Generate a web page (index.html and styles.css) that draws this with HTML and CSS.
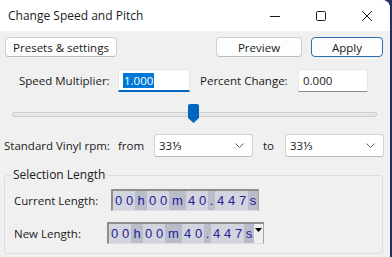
FILE: index.html
```html
<!DOCTYPE html>
<html lang="en">
<head>
  <meta charset="UTF-8" />
  <title>Change Speed and Pitch</title>
  <link rel="stylesheet" href="styles.css">
</head>
<body>
  <div class="window">
    <div class="titlebar">
      <span class="title">Change Speed and Pitch</span>
      <div class="caption">
        <span class="cap-btn">
          <svg width="12" height="12" viewBox="0 0 12 12"><line x1="1" y1="6.5" x2="11" y2="6.5" stroke="#1b1b1b" stroke-width="1"/></svg>
        </span>
        <span class="cap-btn">
          <svg width="12" height="12" viewBox="0 0 12 12"><rect x="1.5" y="1.5" width="9" height="9" rx="1" fill="none" stroke="#1b1b1b" stroke-width="1"/></svg>
        </span>
        <span class="cap-btn">
          <svg width="12" height="12" viewBox="0 0 12 12"><path d="M1 1 L11 11 M11 1 L1 11" stroke="#1b1b1b" stroke-width="1"/></svg>
        </span>
      </div>
    </div>

    <div class="content">
      <div class="btn-row">
        <button class="btn btn-presets">Presets &amp; settings</button>
        <span class="spacer"></span>
        <button class="btn btn-preview">Preview</button>
        <button class="btn btn-apply">Apply</button>
      </div>

      <div class="speed-row">
        <label class="lbl-speed">Speed Multiplier:</label>
        <div class="field field-focus"><span class="sel">1.000</span></div>
        <label class="lbl-percent">Percent Change:</label>
        <div class="field field-percent">0.000</div>
      </div>

      <div class="slider">
        <div class="track"></div>
        <svg class="thumb" width="11" height="19" viewBox="0 0 11 19">
          <path d="M2 0 H9 Q11 0 11 2 V14 L5.5 19 L0 14 V2 Q0 0 2 0 Z" fill="#0067c0"/>
        </svg>
      </div>

      <div class="vinyl-row">
        <span class="lbl-vinyl">Standard Vinyl rpm:</span>
        <span class="lbl-from">from</span>
        <div class="combo">
          <span>33⅓</span>
          <svg width="9" height="5" viewBox="0 0 9 5"><polyline points="0.5,0.5 4.5,4.5 8.5,0.5" fill="none" stroke="#5c5c5c" stroke-width="1"/></svg>
        </div>
        <span class="lbl-to">to</span>
        <div class="combo">
          <span>33⅓</span>
          <svg width="9" height="5" viewBox="0 0 9 5"><polyline points="0.5,0.5 4.5,4.5 8.5,0.5" fill="none" stroke="#5c5c5c" stroke-width="1"/></svg>
        </div>
      </div>

      <fieldset class="group">
        <legend>Selection Length</legend>
        <div class="len-row len-current">
          <span class="lbl-current">Current Length:</span>
          <div class="timectl">
            <span class="d">0</span><span class="d">0</span><span class="u u-h">h</span><span class="d">0</span><span class="d">0</span><span class="u u-m">m</span><span class="d">4</span><span class="d">0</span><span class="u u-dot">.</span><span class="d">4</span><span class="d">4</span><span class="d">7</span><span class="u u-s">s</span>
          </div>
        </div>
        <div class="len-row len-new">
          <span class="lbl-new">New Length:</span>
          <div class="timectl">
            <span class="d">0</span><span class="d">0</span><span class="u u-h">h</span><span class="d">0</span><span class="d">0</span><span class="u u-m">m</span><span class="d">4</span><span class="d">0</span><span class="u u-dot">.</span><span class="d">4</span><span class="d">4</span><span class="d">7</span><span class="u u-s">s</span><span class="menu-arrow"><svg width="7" height="5" viewBox="0 0 7 5"><path d="M0 0 H7 L3.5 4 Z" fill="#000"/></svg></span>
          </div>
        </div>
      </fieldset>
    </div>
  </div>
</body>
</html>
```

FILE: styles.css
```css
html, body {
  margin: 0;
  padding: 0;
}

body {
  width: 392px;
  height: 257px;
  overflow: hidden;
  background: #24315e;
  font-family: 'Open Sans', 'Noto Sans', sans-serif;
  font-size: 11.5px;
  color: #1a1a1a;
}

.window {
  width: 390px;
  height: 257px;
  background: #f0f0f0;
  border-top-right-radius: 8px;
  overflow: hidden;
}

.titlebar {
  height: 31px;
  background: #fff;
  display: flex;
  align-items: center;
}

.title {
  padding-left: 8px;
  font-size: 12px;
  flex: 1;
}

.caption {
  display: flex;
  height: 31px;
}

.cap-btn {
  width: 46px;
  display: flex;
  align-items: center;
  justify-content: center;
}

.content {
  padding-top: 6px;
}

.btn-row {
  display: flex;
  padding: 0 7px 0 5px;
}

.spacer {
  flex: 1;
}

.btn {
  height: 20px;
  font-family: inherit;
  font-size: 11.5px;
  color: #1a1a1a;
  background: #fdfdfd;
  border: 1px solid #d0d0d0;
  border-bottom-color: #bcbcbc;
  border-radius: 4px;
  padding: 0;
}

.btn-presets { width: 112px; }
.btn-preview { width: 86px; margin-right: 9px; }
.btn-apply {
  width: 72px;
  border: 1px solid #2c6cb0;
}

.speed-row {
  display: flex;
  align-items: center;
  margin-top: 12px;
  padding-left: 19px;
}

.lbl-speed { width: 99px; }
.lbl-percent { width: 98px; margin-left: 10px; }

.field {
  height: 23px;
  box-sizing: border-box;
  background: #fff;
  border: 1px solid #e6e6e6;
  border-bottom: 1px solid #8a8a8a;
  border-radius: 3px 3px 0 0;
  padding: 0 4px;
  display: flex;
  align-items: center;
}

.field-focus {
  width: 72px;
  border-bottom: 2px solid #0067c0;
}

.field-percent { width: 70px; }

.sel {
  background: #0078d7;
  color: #fff;
  padding: 0 1px;
  line-height: 15px;
}

.slider {
  position: relative;
  margin: 12px 0 0 12px;
  width: 365px;
  height: 19px;
}

.track {
  position: relative;
  top: 8px;
  height: 3px;
  background: #e6e6e6;
  border: 1px solid #cfcfcf;
  border-radius: 2px;
  box-sizing: content-box;
  width: 363px;
}

.thumb {
  position: absolute;
  left: 176px;
  top: 0;
}

.vinyl-row {
  display: flex;
  align-items: center;
  margin-top: 11px;
  padding-left: 4px;
}

.lbl-vinyl { width: 114px; }
.lbl-from { width: 36px; }
.lbl-to { width: 22px; margin-left: 10px; }

.combo {
  width: 99px;
  height: 23px;
  box-sizing: border-box;
  background: #fff;
  border: 1px solid #d2d2d2;
  border-bottom-color: #bcbcbc;
  border-radius: 3px;
  display: flex;
  align-items: center;
  justify-content: space-between;
  padding: 0 8px 0 4px;
}

.group {
  margin: 10px 0 0 4px;
  width: 379px;
  box-sizing: border-box;
  border: 1px solid #dcdcdc;
  border-radius: 3px;
  padding: 0 0 9px 9px;
}

.group legend {
  margin-left: -2px;
  padding: 0 1px;
  line-height: 16px;
  font-size: 12px;
}

.len-row {
  display: flex;
  align-items: center;
}

.len-current { margin-top: 6px; }
.len-new { margin-top: 11px; }

.lbl-current { width: 97px; }
.lbl-new { width: 93px; }

.timectl {
  display: flex;
  height: 22px;
  box-sizing: border-box;
  background: #b9bcc9;
  border-top: 2px solid #8e8e8e;
  border-left: 2px solid #8e8e8e;
  border-right: 1px solid #a6a6a6;
  border-bottom: 1px solid #dedede;
  font-family: 'Liberation Sans', Arial, sans-serif;
  font-size: 13px;
  color: #23239a;
  line-height: 19px;
}

.timectl span {
  text-align: center;
}

.d {
  width: 11px;
  background: #d3d5de;
}

.u-h { width: 12px; }
.u-m { width: 17px; }
.u-dot { width: 7px; }
.u-s { width: 10px; }

.menu-arrow {
  width: 9px;
  background: #eceef2;
  display: flex;
  align-items: flex-start;
  justify-content: center;
  padding-top: 4px;
  box-sizing: border-box;
}
```
